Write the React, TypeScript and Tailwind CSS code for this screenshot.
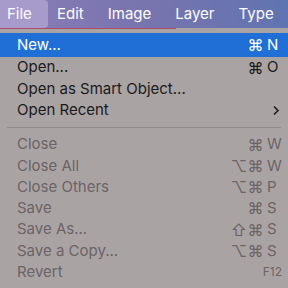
const font = { fontFamily: "Inter, 'Liberation Sans', sans-serif" };

type Item = {
  label: string;
  mods?: string;
  keyChar?: string;
  fkey?: string;
  submenu?: boolean;
  disabled?: boolean;
  active?: boolean;
};

const topItems: Item[] = [
  { label: "New...", mods: "⌘", keyChar: "N", active: true },
  { label: "Open...", mods: "⌘", keyChar: "O" },
  { label: "Open as Smart Object..." },
  { label: "Open Recent", submenu: true },
];

const bottomItems: Item[] = [
  { label: "Close", mods: "⌘", keyChar: "W", disabled: true },
  { label: "Close All", mods: "⌥⌘", keyChar: "W", disabled: true },
  { label: "Close Others", mods: "⌥⌘", keyChar: "P", disabled: true },
  { label: "Save", mods: "⌘", keyChar: "S", disabled: true },
  { label: "Save As...", mods: "⇧⌘", keyChar: "S", disabled: true },
  { label: "Save a Copy...", mods: "⌥⌘", keyChar: "S", disabled: true },
  { label: "Revert", fkey: "F12", disabled: true },
];

const MenuRow = ({ item }: { item: Item }) => {
  const color = item.active
    ? "text-white"
    : item.disabled
      ? "text-[#6a6465]"
      : "text-[#1a1a1a]";
  return (
    <div
      className={`flex items-center pl-[17px] pr-[6px] text-[15px] ${color} ${
        item.active ? "bg-[#1f6fd6] h-[24px]" : "h-[21.3px]"
      }`}
    >
      <span className="flex-1 whitespace-nowrap">{item.label}</span>
      {item.mods && (
        <span className="flex items-center">
          <span className="text-right text-[16px] tracking-[0.5px]">{item.mods}</span>
          <span className="w-[18px] pl-[3px]">{item.keyChar}</span>
        </span>
      )}
      {item.fkey && <span className="text-[12px]">{item.fkey}</span>}
      {item.submenu && (
        <svg width="8" height="11" viewBox="0 0 8 11" className="mr-[2px]">
          <path d="M2 1.5 L6 5.5 L2 9.5" fill="none" stroke="#1a1a1a" strokeWidth="1.6" />
        </svg>
      )}
    </div>
  );
};

export default function App() {
  const menus = ["File", "Edit", "Image", "Layer", "Type"];
  return (
    <div className="w-[288px] h-[288px] overflow-hidden bg-[#aaa3a4]" style={font}>
      {/* menu bar */}
      <div className="h-[28px] flex items-center bg-gradient-to-r from-[#8a7db8] via-[#7874ad] to-[#5f74b2] text-white text-[15px]">
        {menus.map((m, i) => (
          <div
            key={m}
            className={`h-full flex items-center ${
              i === 0 ? "w-[48px] pl-[7px] bg-[#a69bcb] rounded-r-[4px]" : "px-[8px]"
            } ${i === 1 ? "ml-[1px]" : ""} ${i > 1 ? "ml-[8px]" : ""}`}
          >
            {m}
          </div>
        ))}
      </div>
      <div className="w-[176px] h-[1px] bg-[#b0486a]" />

      {/* menu */}
      <div className="pt-[4px]">
        {topItems.map((it) => (
          <MenuRow key={it.label} item={it} />
        ))}
        <div className="h-[13px] flex items-center px-[7px]">
          <div className="h-px w-full bg-[#918b8c]" />
        </div>
        {bottomItems.map((it) => (
          <MenuRow key={it.label} item={it} />
        ))}
      </div>
    </div>
  );
}
